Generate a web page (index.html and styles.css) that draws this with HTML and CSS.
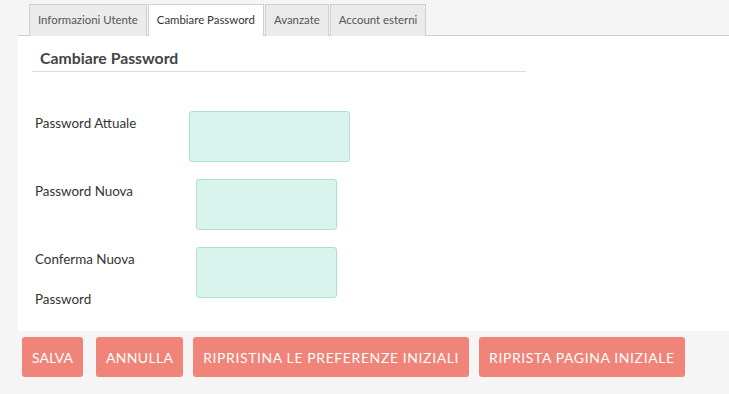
FILE: index.html
```html
<!DOCTYPE html>
<html lang="it">
<head>
    <meta charset="UTF-8">
    <meta name="viewport" content="width=device-width, initial-scale=1.0">
    <title>Cambiare Password</title>
    <link rel="stylesheet" href="styles.css">
</head>
<body>
    <ul class="tabs">
        <li class="tab">Informazioni Utente</li>
        <li class="tab active">Cambiare Password</li>
        <li class="tab">Avanzate</li>
        <li class="tab">Account esterni</li>
    </ul>

    <div class="panel">
        <h2>Cambiare Password</h2>

        <div class="form-row row-first">
            <label for="attuale">Password Attuale</label>
            <input type="password" id="attuale" class="wide">
        </div>

        <div class="form-row">
            <label for="nuova">Password Nuova</label>
            <input type="password" id="nuova">
        </div>

        <div class="form-row">
            <label for="conferma">Conferma Nuova<br>Password</label>
            <input type="password" id="conferma">
        </div>
    </div>

    <div class="actions">
        <button class="salva">Salva</button>
        <button class="annulla">Annulla</button>
        <button>Ripristina le preferenze iniziali</button>
        <button>Riprista pagina iniziale</button>
    </div>
</body>
</html>
```

FILE: styles.css
```css
:root {
    --text-color: #444;
    --border-color: #cfcfcf;
    --button-color: #f08479;
    --input-bg: #d9f4ec;
    --input-border: #a9e2cf;
}

* {
    margin: 0;
    padding: 0;
    box-sizing: border-box;
}

body {
    font-family: Lato, 'Open Sans', sans-serif;
    background-color: #f5f5f5;
    color: var(--text-color);
}

.tabs {
    display: flex;
    list-style: none;
    margin: 4px 0 0 18px;
    padding-left: 11px;
    border-bottom: 1px solid var(--border-color);
    height: 32px;
}

.tab {
    height: 32px;
    padding: 0 8px;
    margin-right: 1px;
    font-size: 11.4px;
    line-height: 30px;
    color: #555;
    background-color: #ebebeb;
    border: 1px solid var(--border-color);
    border-bottom: none;
}

.tab.active {
    background-color: white;
    color: #333;
    box-shadow: 0 1px 0 white;
}

.panel {
    margin-left: 18px;
    height: 295px;
    background-color: white;
    padding: 12px 0 0 14px;
}

h2 {
    width: 494px;
    font-size: 15.8px;
    font-weight: bold;
    color: var(--text-color);
    padding: 0 0 3px 8px;
    line-height: 20px;
    border-bottom: 1px solid #dcdcdc;
    margin-bottom: 39px;
}

.form-row {
    display: flex;
    align-items: flex-start;
    height: 68px;
    padding-left: 3px;
}

label {
    width: 161px;
    font-size: 13.4px;
    line-height: 40px;
    margin-top: -8px;
    color: #333;
}

input {
    width: 141px;
    height: 51px;
    background-color: var(--input-bg);
    border: 1px solid var(--input-border);
    border-radius: 3px;
}

input.wide {
    width: 161px;
    margin-left: -7px;
}

.actions {
    display: flex;
    gap: 10px;
    padding: 6px 0 0 22px;
}

button {
    height: 40px;
    padding: 0 10px;
    font-family: inherit;
    font-size: 14px;
    letter-spacing: 0.6px;
    text-transform: uppercase;
    color: white;
    background-color: var(--button-color);
    border: none;
    border-radius: 3px;
    cursor: pointer;
}

button.salva {
    letter-spacing: 0;
    margin-right: 3px;
}

button.annulla {
    letter-spacing: 0.3px;
}
```
